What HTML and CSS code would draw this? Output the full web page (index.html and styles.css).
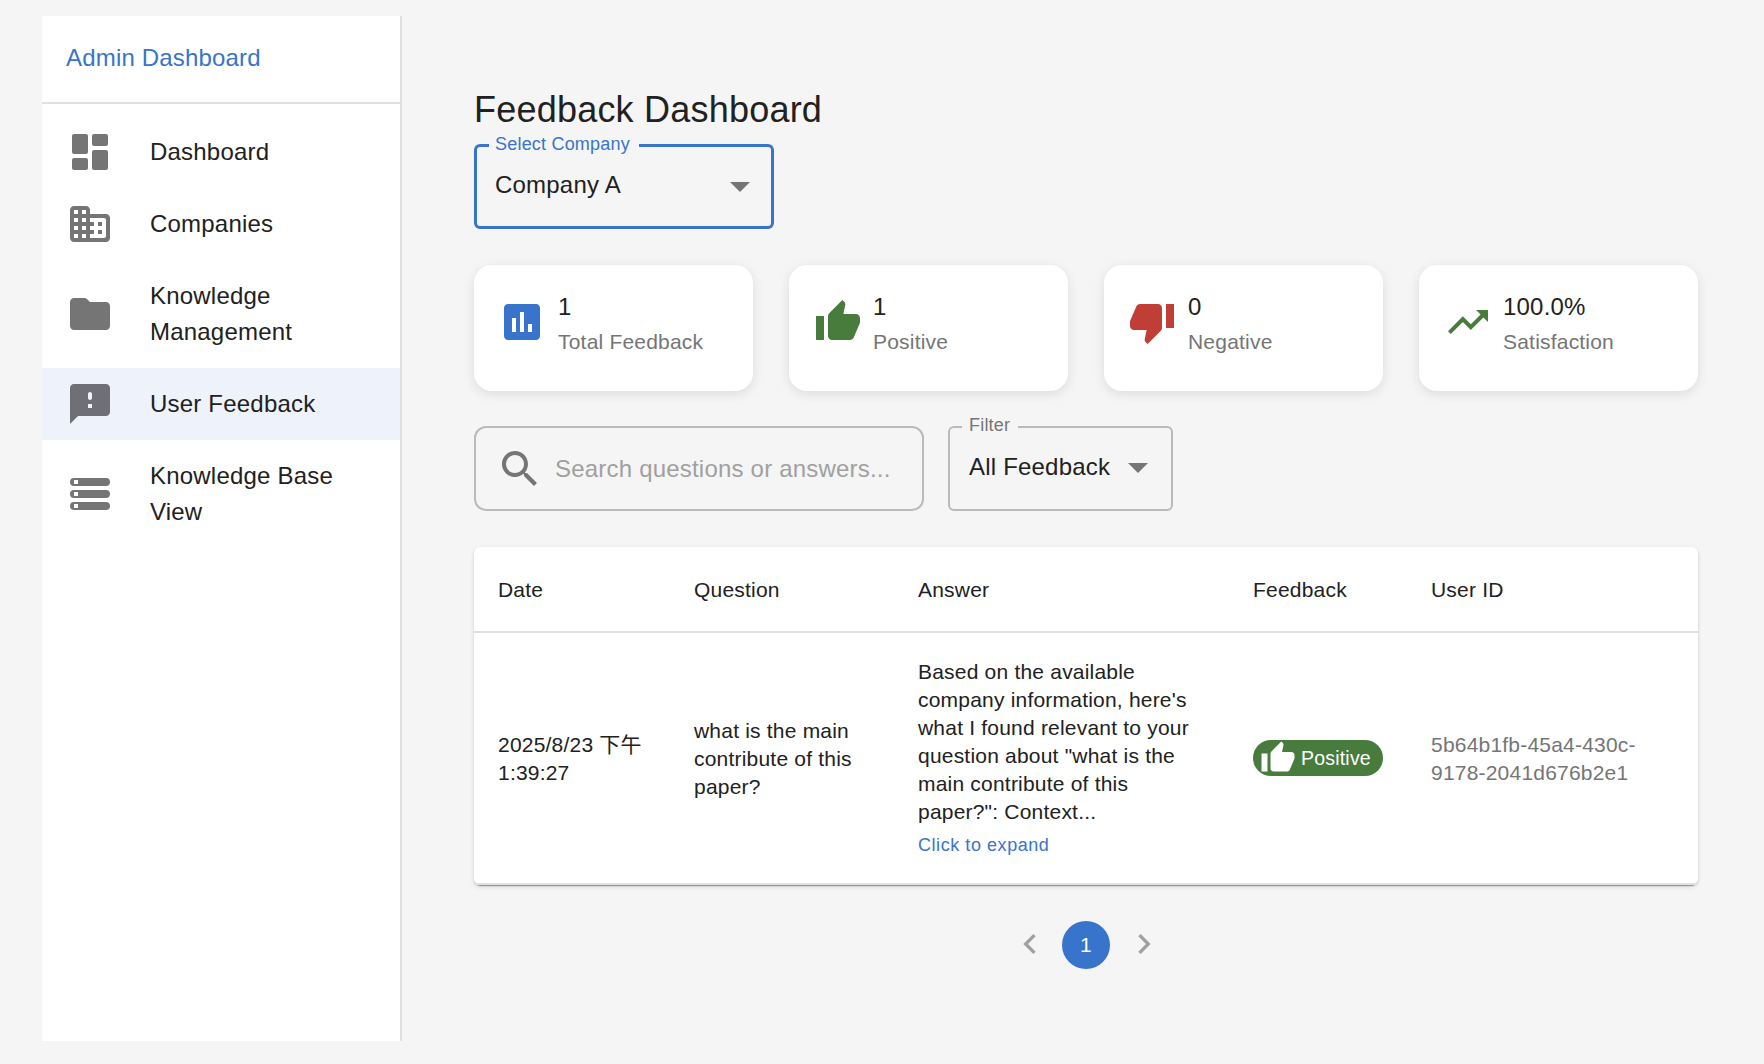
FILE: index.html
```html
<!DOCTYPE html>
<html lang="en">
<head>
<meta charset="utf-8">
<title>Feedback Dashboard</title>
<link rel="stylesheet" href="styles.css">
</head>
<body>
<div class="app">
  <aside class="sidebar">
    <div class="brand">Admin Dashboard</div>
    <nav class="nav">
      <a class="nav-item"><svg class="icon" viewBox="0 0 24 24"><rect x="3" y="3" width="8" height="10" rx="1"/><rect x="3" y="15" width="8" height="6" rx="1"/><rect x="13" y="3" width="8" height="6" rx="1"/><rect x="13" y="11" width="8" height="10" rx="1"/></svg><span>Dashboard</span></a>
      <a class="nav-item"><svg class="icon" viewBox="0 0 24 24"><path d="M12 7V5c0-1.1-.9-2-2-2H4c-1.1 0-2 .9-2 2v14c0 1.1.9 2 2 2h16c1.1 0 2-.9 2-2V9c0-1.1-.9-2-2-2h-8zM6 19H4v-2h2v2zm0-4H4v-2h2v2zm0-4H4V9h2v2zm0-4H4V5h2v2zm4 12H8v-2h2v2zm0-4H8v-2h2v2zm0-4H8V9h2v2zm0-4H8V5h2v2zm9 12h-7v-2h2v-2h-2v-2h2v-2h-2V9h7c.55 0 1 .45 1 1v8c0 .55-.45 1-1 1zm-1-8h-2v2h2v-2zm0 4h-2v2h2v-2z"/></svg><span>Companies</span></a>
      <a class="nav-item"><svg class="icon" viewBox="0 0 24 24"><path d="M10.59 4.59C10.21 4.21 9.7 4 9.17 4H4c-1.1 0-1.99.9-1.99 2L2 18c0 1.1.9 2 2 2h16c1.1 0 2-.9 2-2V8c0-1.1-.9-2-2-2h-8l-1.41-1.41z"/></svg><span>Knowledge Management</span></a>
      <a class="nav-item selected"><svg class="icon" viewBox="0 0 24 24"><path d="M20 2H4c-1.1 0-2 .9-2 2v18l4-4h14c1.1 0 2-.9 2-2V4c0-1.1-.9-2-2-2zm-7 12h-2v-2h2v2zm0-5c0 .55-.45 1-1 1s-1-.45-1-1V7c0-.55.45-1 1-1s1 .45 1 1v2z"/></svg><span>User Feedback</span></a>
      <a class="nav-item"><svg class="icon" viewBox="0 0 24 24"><path fill-rule="evenodd" d="M4 4h16a2 2 0 0 1 0 4H4a2 2 0 0 1 0-4zm0 1v2h2V5zM4 10h16a2 2 0 0 1 0 4H4a2 2 0 0 1 0-4zm0 1v2h2v-2zM4 16h16a2 2 0 0 1 0 4H4a2 2 0 0 1 0-4zm0 1v2h2v-2z"/></svg><span>Knowledge Base View</span></a>
    </nav>
  </aside>

  <main class="main">
    <h1 class="title">Feedback Dashboard</h1>

    <div class="select company focused">
      <span class="label">Select Company</span>
      <span class="value">Company A</span>
      <svg class="icon" viewBox="0 0 24 24"><path d="M7 10l5 5 5-5z"/></svg>
    </div>

    <section class="stats">
      <div class="card">
        <svg class="icon blue" viewBox="0 0 24 24"><path d="M19 3H5c-1.1 0-2 .9-2 2v14c0 1.1.9 2 2 2h14c1.1 0 2-.9 2-2V5c0-1.1-.9-2-2-2zM9 17H7v-7h2v7zm4 0h-2V7h2v10zm4 0h-2v-4h2v4z"/></svg>
        <div><div class="stat-value">1</div><div class="stat-label">Total Feedback</div></div>
      </div>
      <div class="card">
        <svg class="icon green" viewBox="0 0 24 24"><path d="M1 21h4V9H1v12zm22-11c0-1.1-.9-2-2-2h-6.31l.95-4.57.03-.32c0-.41-.17-.79-.44-1.06L14.17 1 7.59 7.59C7.22 7.95 7 8.45 7 9v10c0 1.1.9 2 2 2h9c.83 0 1.54-.5 1.84-1.22l3.02-7.05c.09-.23.14-.47.14-.73v-2z"/></svg>
        <div><div class="stat-value">1</div><div class="stat-label">Positive</div></div>
      </div>
      <div class="card">
        <svg class="icon red" viewBox="0 0 24 24"><path d="M15 3H6c-.83 0-1.54.5-1.84 1.22l-3.02 7.05c-.09.23-.14.47-.14.73v2c0 1.1.9 2 2 2h6.31l-.95 4.57-.03.32c0 .41.17.79.44 1.06L9.83 23l6.59-6.59c.36-.36.58-.86.58-1.41V5c0-1.1-.9-2-2-2zm4 0v12h4V3h-4z"/></svg>
        <div><div class="stat-value">0</div><div class="stat-label">Negative</div></div>
      </div>
      <div class="card">
        <svg class="icon green" viewBox="0 0 24 24"><path d="M16 6l2.29 2.29-4.88 4.88-4-4L2 16.59 3.41 18l6-6 4 4 6.3-6.29L22 12V6z"/></svg>
        <div><div class="stat-value">100.0%</div><div class="stat-label">Satisfaction</div></div>
      </div>
    </section>

    <section class="filters">
      <div class="search">
        <svg class="icon" viewBox="0 0 24 24"><path d="M15.5 14h-.79l-.28-.27C15.41 12.59 16 11.11 16 9.5 16 5.91 13.09 3 9.5 3S3 5.91 3 9.5 5.91 16 9.5 16c1.61 0 3.09-.59 4.23-1.57l.27.28v.79l5 4.99L20.49 19l-4.99-5zm-6 0C7.01 14 5 11.99 5 9.5S7.01 5 9.5 5 14 7.01 14 9.5 11.99 14 9.5 14z"/></svg>
        <span class="placeholder">Search questions or answers...</span>
      </div>
      <div class="select filter">
        <span class="label">Filter</span>
        <span class="value">All Feedback</span>
        <svg class="icon" viewBox="0 0 24 24"><path d="M7 10l5 5 5-5z"/></svg>
      </div>
    </section>

    <div class="table-card">
      <table class="table">
        <colgroup><col class="c-date"><col class="c-question"><col class="c-answer"><col class="c-feedback"><col class="c-user"></colgroup>
        <thead>
          <tr><th>Date</th><th>Question</th><th>Answer</th><th>Feedback</th><th>User ID</th></tr>
        </thead>
        <tbody>
          <tr>
            <td>2025/8/23 下午 1:39:27</td>
            <td>what is the main contribute of this paper?</td>
            <td>Based on the available company information, here's what I found relevant to your question about "what is the main contribute of this paper?": Context...<span class="expand">Click to expand</span></td>
            <td class="chip-cell"><span class="chip"><svg class="chip-icon" viewBox="0 0 24 24"><path d="M1 21h4V9H1v12zm22-11c0-1.1-.9-2-2-2h-6.31l.95-4.57.03-.32c0-.41-.17-.79-.44-1.06L14.17 1 7.59 7.59C7.22 7.95 7 8.45 7 9v10c0 1.1.9 2 2 2h9c.83 0 1.54-.5 1.84-1.22l3.02-7.05c.09-.23.14-.47.14-.73v-2z"/></svg>Positive</span></td>
            <td class="muted">5b64b1fb-45a4-430c-9178-2041d676b2e1</td>
          </tr>
        </tbody>
      </table>
    </div>

    <nav class="pagination">
      <span class="arrow"><svg viewBox="0 0 24 24"><path d="M15.41 7.41L14 6l-6 6 6 6 1.41-1.41L10.83 12z"/></svg></span>
      <span class="page">1</span>
      <span class="arrow next"><svg viewBox="0 0 24 24"><path d="M10 6L8.59 7.41 13.17 12l-4.58 4.59L10 18l6-6z"/></svg></span>
    </nav>
  </main>
</div>
</body>
</html>
```
FILE: styles.css
```css
* { box-sizing: border-box; }

body {
  margin: 0;
  background: #f5f5f5;
  color: #212121;
  font-family: "Liberation Sans", Arial, "Noto Sans CJK SC", sans-serif;
  font-size: 24px;
  line-height: 36px;
  letter-spacing: 0.0085em;
}

.app {
  display: flex;
  height: 1064px;
  padding: 16px 66px 23px 42px;
}

.icon {
  width: 48px;
  height: 48px;
  flex: none;
  fill: #757575;
}
.blue { fill: #3874cb; }
.green {
  margin: 0 -1px 0 1px;
  fill: #477c3c;
}
.red { fill: #c13e37; }

/* Sidebar */
.sidebar {
  width: 360px;
  flex: none;
  background: #fff;
  border-right: 2px solid #e0e0e0;
}
.brand {
  height: 88px;
  padding: 24px;
  border-bottom: 2px solid #e0e0e0;
  color: #3874cb;
  letter-spacing: 0.0075em;
}
.nav { padding-top: 12px; }
.nav-item {
  display: flex;
  align-items: center;
  gap: 36px;
  padding: 18px 24px;
}
.nav-item .icon { margin: -6px 0; }
.selected { background: #eef3fb; }
.selected .icon { fill: #6f7075; }

/* Main column */
.main {
  flex: 1;
  min-width: 0;
  padding: 71px 0 0 72px;
}
.title {
  margin: 0 0 12px;
  font-size: 36px;
  font-weight: 400;
  line-height: 45px;
  letter-spacing: 0.006em;
}

.select {
  position: relative;
  display: flex;
  justify-content: space-between;
  height: 85px;
  border: 2px solid #bababa;
  border-radius: 6px;
  padding: 21px 9px 0 19px;
}
.select .icon { margin-top: -5px; }
.label {
  position: absolute;
  top: -21px;
  left: 12px;
  padding: 0 8px 0 7px;
  background: #f5f5f5;
  color: #757575;
  font-size: 18px;
}
.company { width: 300px; }
.focused {
  border: 3px solid #3874cb;
  padding: 20px 7px 0 18px;
}
.focused .label {
  color: #3874cb;
  padding: 0 9px 0 6px;
}
.filter { width: 225px; }
.filter .icon { margin-top: -6px; }

.stats {
  display: grid;
  grid-template-columns: repeat(4, 1fr);
  gap: 36px;
  margin-top: 36px;
}
.card {
  display: flex;
  align-items: center;
  gap: 12px;
  height: 126px;
  padding: 23px 24px 35px;
  background: #fff;
  border-radius: 18px;
  box-shadow: 0 3px 12px rgba(0, 0, 0, 0.1);
}
.stat-value { line-height: 38px; }
.stat-label {
  padding-top: 1px;
  color: #757575;
  font-size: 21px;
  line-height: 30px;
}

.filters {
  display: flex;
  gap: 24px;
  margin-top: 35px;
}
.search {
  display: flex;
  align-items: center;
  gap: 11px;
  width: 450px;
  height: 85px;
  padding: 0 20px;
  border: 2px solid #bababa;
  border-radius: 12px;
}
.placeholder { color: #a0a0a0; }

/* Feedback table */
.table-card {
  margin-top: 36px;
  background: #fff;
  border-radius: 6px;
  box-shadow: 0 2px 1px -1px rgba(0, 0, 0, 0.3), 0 1px 2px rgba(0, 0, 0, 0.12), 0 2px 5px rgba(0, 0, 0, 0.1);
}
.table {
  width: 100%;
  table-layout: fixed;
  border-collapse: separate;
  border-spacing: 0;
  font-size: 21px;
}
.c-date { width: 196px; }
.c-question { width: 224px; }
.c-answer { width: 335px; }
.c-feedback { width: 178px; }
.table th, .table td {
  padding: 25px 24px 23px;
  border-bottom: 2px solid #e0e0e0;
  text-align: left;
  font-weight: 400;
  vertical-align: middle;
}
.table td { line-height: 28px; }
.table .chip-cell { padding: 24px; }
.expand {
  display: block;
  margin-top: 4px;
  color: #3874cb;
  font-size: 18px;
  line-height: 30px;
  letter-spacing: 0.031em;
}
.table .muted { color: #757575; }
.chip {
  display: flex;
  align-items: center;
  width: 130px;
  height: 36px;
  padding-left: 7px;
  border-radius: 18px;
  background: #477c3c;
  color: #fff;
  font-size: 19.5px;
}
.chip-icon {
  width: 36px;
  height: 36px;
  margin-right: 5px;
  fill: #fff;
}

.pagination {
  display: flex;
  justify-content: center;
  align-items: center;
  gap: 8px;
  margin-top: 36px;
}
.page {
  width: 48px;
  height: 48px;
  border-radius: 50%;
  background: #3874cb;
  color: #fff;
  font-size: 21px;
  line-height: 48px;
  text-align: center;
}
.arrow {
  display: flex;
  justify-content: center;
  width: 48px;
  padding-bottom: 2px;
}
.next { padding-left: 4px; }
.arrow svg {
  width: 40px;
  height: 40px;
  flex: none;
  fill: #a0a0a0;
}
```
